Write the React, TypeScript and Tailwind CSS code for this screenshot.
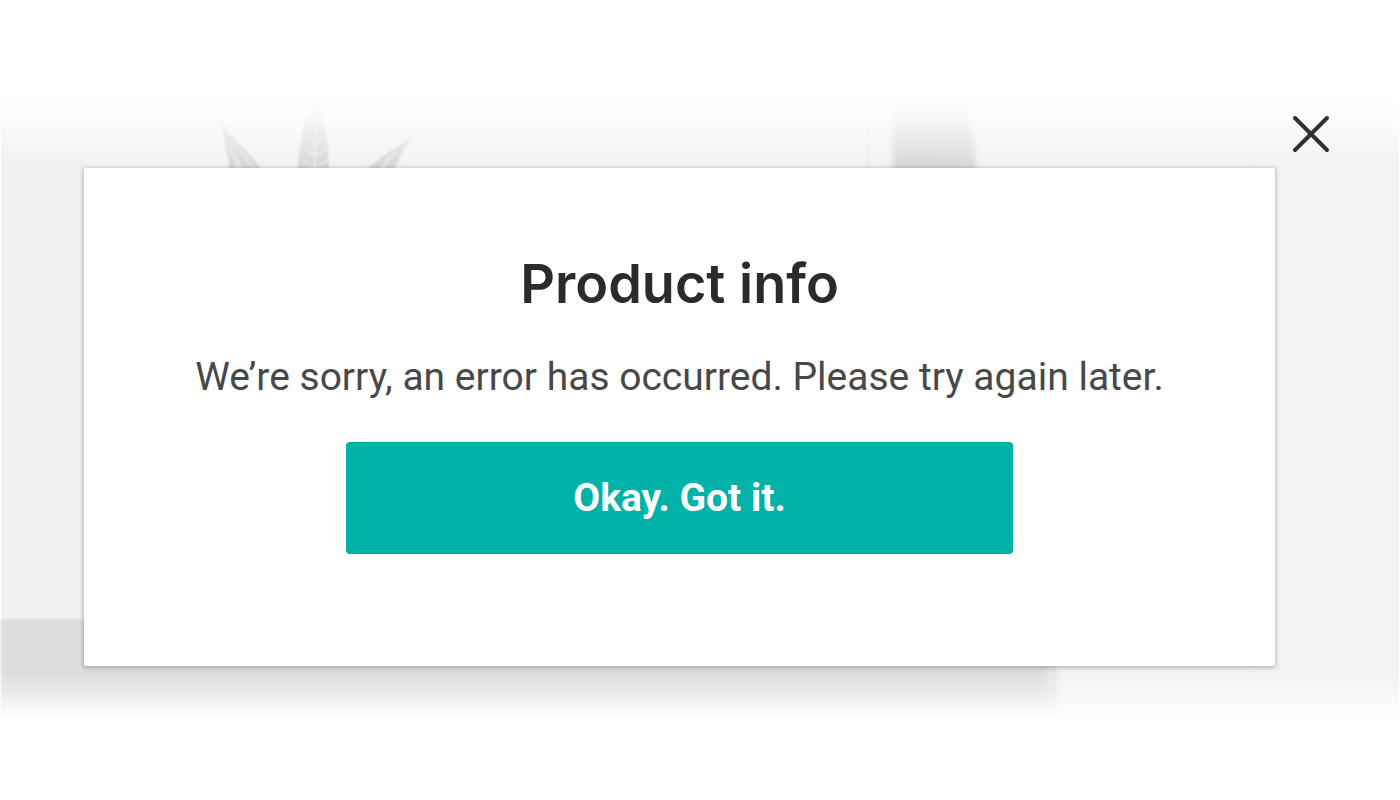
function Backdrop() {
  return (
    <svg
      aria-hidden="true"
      className="absolute inset-0 h-full w-full"
      viewBox="0 0 1400 624"
      preserveAspectRatio="none"
    >
      <defs>
        <filter id="soft" x="-20%" y="-20%" width="140%" height="140%">
          <feGaussianBlur stdDeviation="1.1" />
        </filter>
        <filter id="softer" x="-20%" y="-20%" width="140%" height="140%">
          <feGaussianBlur stdDeviation="3" />
        </filter>
        <linearGradient id="fadeTop" x1="0" x2="0" y1="0" y2="1">
          <stop offset="0" stopColor="#fff" />
          <stop offset="0.3" stopColor="#fff" stopOpacity="0.82" />
          <stop offset="0.65" stopColor="#fff" stopOpacity="0.4" />
          <stop offset="1" stopColor="#fff" stopOpacity="0" />
        </linearGradient>
        <linearGradient id="fadeBottom" x1="0" x2="0" y1="0" y2="1">
          <stop offset="0" stopColor="#fff" stopOpacity="0" />
          <stop offset="0.5" stopColor="#fff" stopOpacity="0.42" />
          <stop offset="1" stopColor="#fff" />
        </linearGradient>
      </defs>
      <rect x="1" width="1398" height="624" fill="#f2f2f2" />
      <rect x="1" width="82" height="624" fill="#f0f0f0" />
      <rect x="1254" width="1" height="624" fill="#eeeeee" />
      <path d="M868 22V40M869 46V73" stroke="#e9e9e9" strokeWidth="3" filter="url(#soft)" />

      {/* leaf */}
      <g filter="url(#soft)">
        <path d="M219 17C224 32 232 41 241 50C250 58 258 67 264 80H231C228 64 225 42 219 17Z" fill="#d6d6d6" />
        <path d="M316 0C323 16 329 41 329 80H298C298 42 307 16 316 0Z" fill="#d6d6d6" />
        <path d="M413 41C402 51 400 64 391 80H362C374 64 392 54 413 41Z" fill="#d6d6d6" />
        <path
          d="M228 50L246 80M240 54L258 78M236 60L238 78M315 22V80M314 48L306 41M314 60L304 52M314 72L302 64M317 48L324 41M317 60L326 52M317 72L327 64M397 55L374 80M388 60L383 78"
          fill="none"
          stroke="#e8e8e8"
          strokeWidth="2"
        />
      </g>

      {/* bottle cap */}
      <g filter="url(#softer)">
        <path d="M893 0H964C970 24 975 50 977 80H893Z" fill="#d7d7d7" />
      </g>
      <path
        d="M900 36V80M909 34V80M919 44V80M927 52V80M937 56V80M947 56V80M957 58V80"
        stroke="#d3d3d3"
        strokeWidth="3"
        filter="url(#softer)"
      />

      {/* table top */}
      <path d="M1 525H1053V630H1V525Z" fill="#dddddd" filter="url(#soft)" />
      <rect x="1046" y="560" width="12" height="70" fill="#e4e4e4" filter="url(#softer)" />

      <rect width="1400" height="72" fill="url(#fadeTop)" />
      <rect y="576" width="1400" height="48" fill="url(#fadeBottom)" />
    </svg>
  );
}

export default function App() {
  return (
    <main className="min-h-screen bg-white py-24 font-['Roboto',sans-serif]">
      <section className="relative pt-[72px] pr-[125px] pb-[52px] pl-[84px]">
        <Backdrop />
        <button
          type="button"
          aria-label="Close"
          className="absolute top-4 right-[67px] flex h-11 w-11 cursor-pointer items-center justify-center text-[#303030]"
        >
          <svg viewBox="0 0 44 44" className="h-11 w-11" aria-hidden="true">
            <path d="M6 6L38 38M38 6L6 38" fill="none" stroke="currentColor" strokeWidth="4" strokeLinecap="round" />
          </svg>
        </button>
        <div
          role="dialog"
          aria-labelledby="dialog-title"
          aria-describedby="dialog-message"
          className="relative flex flex-col items-center rounded-xs bg-white px-10 pt-20 pb-28 shadow-[0_1px_4px_1px_rgba(0,0,0,0.24)]"
        >
          <h1
            id="dialog-title"
            className="text-center font-['Inter',sans-serif] text-[54px] leading-[72px] font-semibold text-[#2b2b2b]"
          >
            Product info
          </h1>
          <p id="dialog-message" className="mt-8 text-center text-[39px] leading-[50px] text-[#484848]">
            We’re sorry, an error has occurred. Please try again later.
          </p>
          <button
            type="button"
            className="mt-10 h-28 w-3/5 cursor-pointer rounded bg-[#00b2a7] text-[39px] leading-[50px] font-bold text-white"
          >
            Okay. Got it.
          </button>
        </div>
      </section>
    </main>
  );
}
